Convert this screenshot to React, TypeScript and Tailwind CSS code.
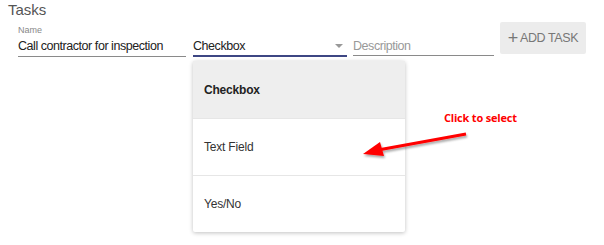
const options = ["Checkbox", "Text Field", "Yes/No"];

const App = () => {
    return (
        <div className="relative w-[604px] h-[245px] bg-white overflow-hidden font-['Liberation_Sans',Arial,sans-serif]">
            <h1 className="pl-[8px] pt-[1px] text-[15px] leading-[18px] text-[#555]">Tasks</h1>

            <div className="flex items-start pl-[18px] pt-[6px]">
                {/* Name */}
                <div className="w-[168px]">
                    <div className="text-[9px] leading-[10px] text-[#888]">Name</div>
                    <div className="h-[22px] pt-[3px] text-[12.5px] leading-[16px] tracking-[-0.45px] text-[#222] border-b border-[#8a8a8a]">
                        Call contractor for inspection
                    </div>
                </div>

                {/* Type select */}
                <div className="ml-[7px] w-[154px] pt-[10px]">
                    <div className="relative h-[22px] pt-[3px] text-[12.5px] leading-[16px] tracking-[-0.45px] text-[#222] border-b-2 border-[#3d4683]">
                        Checkbox
                        <span className="absolute right-[4px] top-[9px] w-0 h-0 border-l-[4px] border-r-[4px] border-t-[4px] border-l-transparent border-r-transparent border-t-[#999]" />
                    </div>
                </div>

                {/* Description */}
                <div className="ml-[6px] w-[141px] pt-[10px]">
                    <div className="h-[21px] pt-[3px] text-[12.5px] leading-[16px] tracking-[-0.45px] text-[#999] border-b border-[#8a8a8a]">
                        Description
                    </div>
                </div>

                <button className="ml-[6px] -mt-[3px] w-[86px] h-[32px] flex items-center justify-center rounded-[2px] bg-[#ececec] text-[12.5px] tracking-[-0.4px] text-[#777]">
                    <span className="text-[18px] leading-none mr-[2px] font-light">+</span>ADD TASK
                </button>
            </div>

            {/* Dropdown menu */}
            <div className="absolute left-[193px] top-[61px] w-[212px] bg-white rounded-[2px] shadow-[0_1px_4px_rgba(0,0,0,0.25)]">
                {options.map((opt, i) => (
                    <div
                        key={opt}
                        className={
                            i === 0
                                ? "h-[57px] flex items-center pl-[11px] text-[12px] tracking-[-0.2px] font-bold text-[#222] bg-[#eeeeee]"
                                : "h-[57px] flex items-center pl-[11px] text-[12px] tracking-[-0.2px] text-[#333] border-t border-[#e6e6e6]"
                        }
                    >
                        {opt}
                    </div>
                ))}
            </div>

            {/* Annotation */}
            <div className="absolute left-[444px] top-[110px] text-[11px] tracking-[-0.2px] font-bold text-[#f00] font-['Open_Sans',sans-serif]">
                Click to select
            </div>
            <svg className="absolute left-0 top-0" width="604" height="245">
                <defs>
                    <filter id="sh" x="-20%" y="-50%" width="140%" height="200%">
                        <feDropShadow dx="1" dy="2" stdDeviation="1" floodColor="#000" floodOpacity="0.35" />
                    </filter>
                </defs>
                <g filter="url(#sh)">
                    <line x1="466" y1="134" x2="378" y2="150" stroke="#f00" strokeWidth="3" />
                    <polygon points="363,154 380,142 384,156" fill="#f00" />
                </g>
            </svg>
        </div>
    );
};

export default App;
